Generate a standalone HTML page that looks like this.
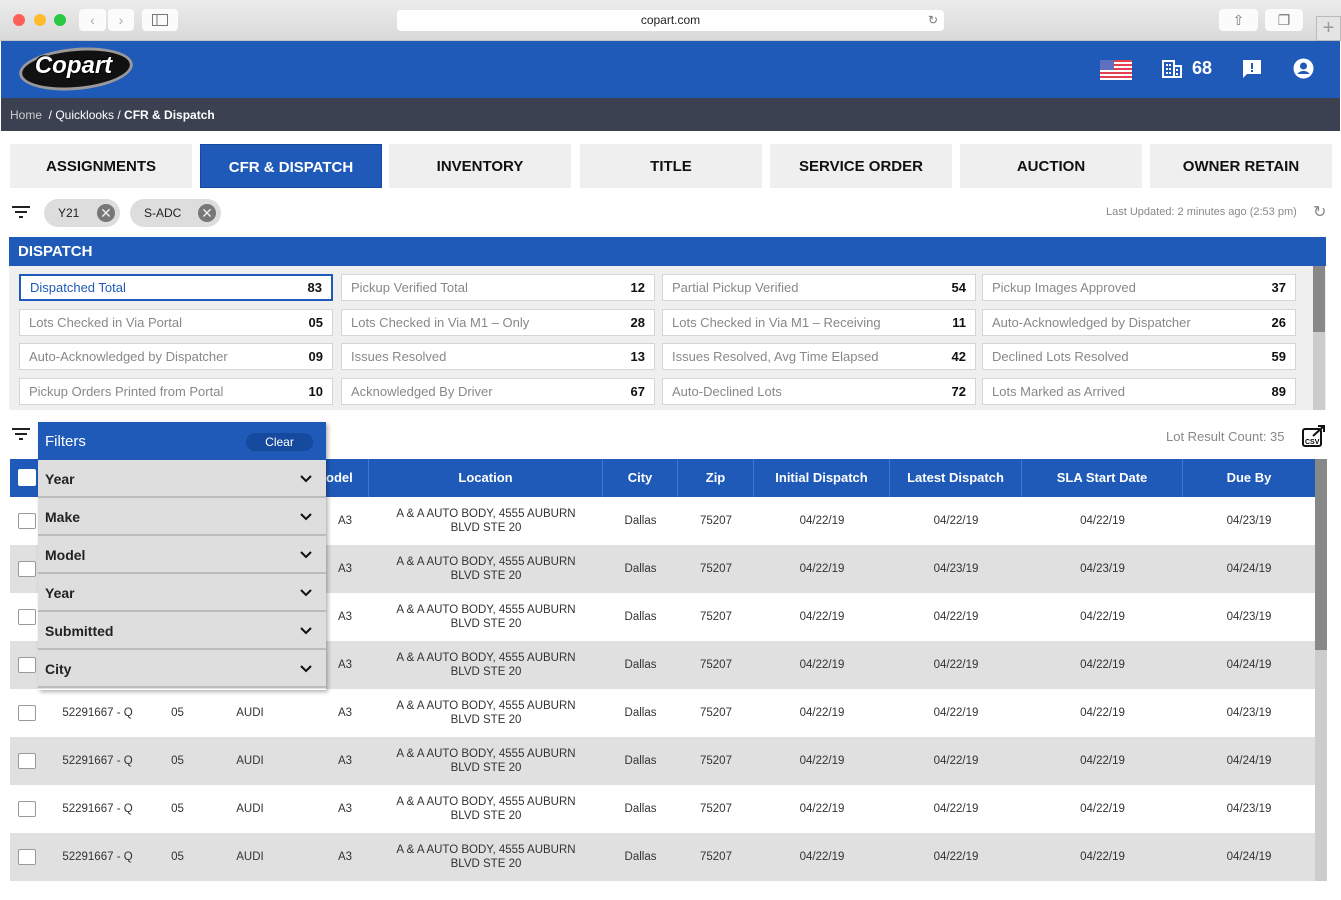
<!DOCTYPE html>
<html><head><meta charset="utf-8"><style>
*{box-sizing:border-box;margin:0;padding:0}
body{width:1341px;height:900px;overflow:hidden;background:#fff;font-family:"Liberation Sans",sans-serif;position:relative}
.a{position:absolute}
.chrome{left:0;top:0;width:1341px;height:41px;background:linear-gradient(#ececec,#d9d9d9);border-bottom:1px solid #c4c4c4}
.dot{width:12px;height:12px;border-radius:50%;top:14px}
.btn{background:#fbfbfb;border-radius:4px;height:22px;top:9px;color:#aaa;font-size:14px;text-align:center;line-height:22px}
.hdr{left:1px;top:41px;width:1339px;height:57px;background:#1f5ab9}
.bc{left:1px;top:98px;width:1339px;height:33px;background:#3b4150;color:#fff;font-size:12px;line-height:34px;padding-left:9px}
.tab{top:144px;height:44px;width:182px;background:#efefef;font-weight:bold;font-size:15px;text-align:center;line-height:45px;color:#111}
.tab.on{background:#1f5ab9;color:#fff;border:1px solid #164a9e}
.chip{top:199px;height:28px;border-radius:14px;background:#ddd;font-size:12px;line-height:28px;padding-left:14px;color:#222}
.chip i{position:absolute;right:5px;top:5px;width:18px;height:18px;border-radius:50%;background:#777;color:#eee;font-style:normal;text-align:center;line-height:18px;font-size:14px}
.card{height:27px;width:314px;background:#fff;border:1px solid #d5d5d5;font-size:13px;color:#888;line-height:26px;padding-left:9px}
.card b{position:absolute;right:9px;top:0;color:#111;font-size:13px}
.th{top:459px;height:38px;background:#1f5ab9;color:#fff;font-weight:bold;font-size:13px;line-height:38px;text-align:center;border-right:1px solid #3f78cf}
.row{left:10px;width:1305px;height:48px;font-size:11.5px;color:#333}
.row span{position:absolute;top:0;line-height:48px;text-align:center}
.row .loc{line-height:14px;top:10px}
.cb{position:absolute;left:8px;top:16px;width:18px;height:16px;border:1px solid #999;border-radius:2px;background:#fff}
.fi{left:38px;width:288px;height:38px;background:#dedede;border-bottom:2px solid #bbb;font-weight:bold;font-size:14px;line-height:38px;padding-left:7px;color:#222}
.fi svg{position:absolute;right:14px;top:15px}
</style></head><body>
<div class="a chrome"></div>
<div class="a dot" style="left:13px;background:#fe5f57"></div>
<div class="a dot" style="left:34px;background:#febc2e"></div>
<div class="a dot" style="left:54px;background:#28c840"></div>
<div class="a btn" style="left:79px;width:27px">‹</div>
<div class="a btn" style="left:108px;width:26px">›</div>
<div class="a btn" style="left:142px;width:36px"><svg width="16" height="12" style="margin-top:5px"><rect x="0.5" y="0.5" width="15" height="11" fill="none" stroke="#777"/><line x1="5" y1="0" x2="5" y2="12" stroke="#777"/></svg></div>
<div class="a" style="left:397px;top:10px;width:547px;height:21px;background:#fff;border-radius:4px;font-size:12px;text-align:center;line-height:21px;color:#222">copart.com<span style="position:absolute;right:6px;color:#777">↻</span></div>
<div class="a btn" style="left:1219px;width:39px;color:#777">⇧</div>
<div class="a btn" style="left:1265px;width:38px;color:#777">❐</div>
<div class="a" style="left:1316px;top:16px;width:25px;height:25px;border:1px solid #bbb;background:#e4e4e4;color:#999;font-size:20px;text-align:center;line-height:22px">+</div>

<div class="a hdr"></div>
<div class="a" style="left:19px;top:48px;width:114px;height:42px;border-radius:50%;background:#111;border:3px solid #999;transform:rotate(-5deg)"></div>
<div class="a" style="left:21px;top:52px;width:105px;text-align:center;font-size:24px;font-weight:bold;font-style:italic;color:#fff;text-shadow:1px 1px 0 #000,-1px -1px 0 #000">Copart</div>
<svg class="a" style="left:1100px;top:60px" width="32" height="20"><rect width="32" height="20" fill="#fff"/><g fill="#e04050"><rect y="0" width="32" height="2"/><rect y="4" width="32" height="2"/><rect y="8" width="32" height="2"/><rect y="12" width="32" height="2"/><rect y="16" width="32" height="2"/></g><rect width="14" height="10" fill="#6070c0"/></svg>
<svg class="a" style="left:1162px;top:60px" width="20" height="18"><path d="M1 1h11v16H1z M12 6h7v11h-7" fill="none" stroke="#fff" stroke-width="2"/><g fill="#fff"><rect x="4" y="4" width="2" height="2"/><rect x="7" y="4" width="2" height="2"/><rect x="4" y="8" width="2" height="2"/><rect x="7" y="8" width="2" height="2"/><rect x="4" y="12" width="2" height="2"/><rect x="7" y="12" width="2" height="2"/><rect x="14" y="9" width="2" height="2"/><rect x="14" y="13" width="2" height="2"/></g></svg>
<div class="a" style="left:1192px;top:58px;color:#fff;font-weight:bold;font-size:18px">68</div>
<svg class="a" style="left:1242px;top:59px" width="20" height="20"><path d="M1 1h18v14H5l-4 4z" fill="#fff"/><rect x="9" y="4" width="2" height="6" fill="#1f5ab9"/><rect x="9" y="11" width="2" height="2" fill="#1f5ab9"/></svg>
<svg class="a" style="left:1293px;top:58px" width="21" height="21"><circle cx="10.5" cy="10.5" r="10" fill="#fff"/><circle cx="10.5" cy="8" r="3.5" fill="#1f5ab9"/><path d="M4.5 16c2-4 10-4 12 0" fill="#1f5ab9"/></svg>
<div class="a bc"><span style="color:#ccc">Home</span> &nbsp;/ Quicklooks / <b>CFR &amp; Dispatch</b></div>

<div class="a tab" style="left:10px">ASSIGNMENTS</div>
<div class="a tab on" style="left:200px">CFR &amp; DISPATCH</div>
<div class="a tab" style="left:389px">INVENTORY</div>
<div class="a tab" style="left:580px">TITLE</div>
<div class="a tab" style="left:770px">SERVICE ORDER</div>
<div class="a tab" style="left:960px">AUCTION</div>
<div class="a tab" style="left:1150px">OWNER RETAIN</div>

<svg class="a" style="left:12px;top:206px" width="18" height="13"><rect y="0" width="18" height="2" fill="#222"/><rect x="3" y="5" width="12" height="2" fill="#222"/><rect x="7" y="10" width="4" height="2" fill="#222"/></svg>
<div class="a chip" style="left:44px;width:76px">Y21<i>✕</i></div>
<div class="a chip" style="left:130px;width:91px">S-ADC<i>✕</i></div>
<div class="a" style="left:1106px;top:206px;font-size:11px;color:#888">Last Updated: 2 minutes ago (2:53 pm)</div>
<div class="a" style="left:1313px;top:202px;font-size:16px;color:#888">↻</div>

<div class="a" style="left:9px;top:237px;width:1317px;height:29px;background:#1f5ab9;color:#fff;font-weight:bold;font-size:15px;line-height:30px;padding-left:9px">DISPATCH</div>
<div class="a" style="left:9px;top:266px;width:1317px;height:144px;background:#efefef"></div>
<div class="a" style="left:1313px;top:266px;width:12px;height:144px;background:#ccc"></div>
<div class="a" style="left:1313px;top:266px;width:12px;height:66px;background:#888"></div>

<div class="a card" style="left:19px;top:274px;border:2px solid #1f5ab9;color:#1f5ab9;line-height:24px">Dispatched Total<b>83</b></div>
<div class="a card" style="left:341px;top:274px">Pickup Verified Total<b>12</b></div>
<div class="a card" style="left:662px;top:274px">Partial Pickup Verified<b>54</b></div>
<div class="a card" style="left:982px;top:274px">Pickup Images Approved<b>37</b></div>
<div class="a card" style="left:19px;top:309px">Lots Checked in Via Portal<b>05</b></div>
<div class="a card" style="left:341px;top:309px">Lots Checked in Via M1 – Only<b>28</b></div>
<div class="a card" style="left:662px;top:309px">Lots Checked in Via M1 – Receiving<b>11</b></div>
<div class="a card" style="left:982px;top:309px">Auto-Acknowledged by Dispatcher<b>26</b></div>
<div class="a card" style="left:19px;top:343px">Auto-Acknowledged by Dispatcher<b>09</b></div>
<div class="a card" style="left:341px;top:343px">Issues Resolved<b>13</b></div>
<div class="a card" style="left:662px;top:343px">Issues Resolved, Avg Time Elapsed<b>42</b></div>
<div class="a card" style="left:982px;top:343px">Declined Lots Resolved<b>59</b></div>
<div class="a card" style="left:19px;top:378px">Pickup Orders Printed from Portal<b>10</b></div>
<div class="a card" style="left:341px;top:378px">Acknowledged By Driver<b>67</b></div>
<div class="a card" style="left:662px;top:378px">Auto-Declined Lots<b>72</b></div>
<div class="a card" style="left:982px;top:378px">Lots Marked as Arrived<b>89</b></div>

<svg class="a" style="left:12px;top:428px" width="18" height="13"><rect y="0" width="18" height="2" fill="#222"/><rect x="3" y="5" width="12" height="2" fill="#222"/><rect x="7" y="10" width="4" height="2" fill="#222"/></svg>
<div class="a" style="left:1166px;top:429px;font-size:13px;color:#888">Lot Result Count: 35</div>
<svg class="a" style="left:1301px;top:424px" width="26" height="24"><rect x="2" y="5" width="18" height="17" rx="2" fill="none" stroke="#111" stroke-width="2"/><path d="M12 12L23 2M17 2h6v6" fill="none" stroke="#111" stroke-width="2"/><text x="4" y="20" font-size="7" font-family="Liberation Sans" font-weight="bold">CSV</text></svg>

<div class="a th" style="left:10px;width:359px"></div>
<div class="a" style="left:18px;top:469px;width:18px;height:17px;background:#fff;border-radius:2px"></div>
<div class="a th" style="left:326px;width:43px;text-align:left;border-right:1px solid #3f78cf">odel</div>
<div class="a th" style="left:369px;width:234px">Location</div>
<div class="a th" style="left:603px;width:75px">City</div>
<div class="a th" style="left:678px;width:76px">Zip</div>
<div class="a th" style="left:754px;width:136px">Initial Dispatch</div>
<div class="a th" style="left:890px;width:132px">Latest Dispatch</div>
<div class="a th" style="left:1022px;width:161px">SLA Start Date</div>
<div class="a th" style="left:1183px;width:132px;border:none">Due By</div>
<div class="a" style="left:1315px;top:459px;width:12px;height:422px;background:#ccc"></div>
<div class="a" style="left:1315px;top:459px;width:12px;height:191px;background:#888"></div>

<div class="a row" style="top:497px;background:#fff"><i class="cb"></i><span style="left:45px;width:85px">52291667 - Q</span><span style="left:150px;width:35px">05</span><span style="left:215px;width:50px">AUDI</span><span style="left:320px;width:30px">A3</span><span class="loc" style="left:359px;width:234px">A &amp; A AUTO BODY, 4555 AUBURN<br>BLVD STE 20</span><span style="left:593px;width:75px">Dallas</span><span style="left:668px;width:76px">75207</span><span style="left:744px;width:136px">04/22/19</span><span style="left:880px;width:132px">04/22/19</span><span style="left:1012px;width:161px">04/22/19</span><span style="left:1173px;width:132px">04/23/19</span></div>
<div class="a row" style="top:545px;background:#e0e0e0"><i class="cb"></i><span style="left:45px;width:85px">52291667 - Q</span><span style="left:150px;width:35px">05</span><span style="left:215px;width:50px">AUDI</span><span style="left:320px;width:30px">A3</span><span class="loc" style="left:359px;width:234px">A &amp; A AUTO BODY, 4555 AUBURN<br>BLVD STE 20</span><span style="left:593px;width:75px">Dallas</span><span style="left:668px;width:76px">75207</span><span style="left:744px;width:136px">04/22/19</span><span style="left:880px;width:132px">04/23/19</span><span style="left:1012px;width:161px">04/23/19</span><span style="left:1173px;width:132px">04/24/19</span></div>
<div class="a row" style="top:593px;background:#fff"><i class="cb"></i><span style="left:45px;width:85px">52291667 - Q</span><span style="left:150px;width:35px">05</span><span style="left:215px;width:50px">AUDI</span><span style="left:320px;width:30px">A3</span><span class="loc" style="left:359px;width:234px">A &amp; A AUTO BODY, 4555 AUBURN<br>BLVD STE 20</span><span style="left:593px;width:75px">Dallas</span><span style="left:668px;width:76px">75207</span><span style="left:744px;width:136px">04/22/19</span><span style="left:880px;width:132px">04/22/19</span><span style="left:1012px;width:161px">04/22/19</span><span style="left:1173px;width:132px">04/23/19</span></div>
<div class="a row" style="top:641px;background:#e0e0e0"><i class="cb"></i><span style="left:45px;width:85px">52291667 - Q</span><span style="left:150px;width:35px">05</span><span style="left:215px;width:50px">AUDI</span><span style="left:320px;width:30px">A3</span><span class="loc" style="left:359px;width:234px">A &amp; A AUTO BODY, 4555 AUBURN<br>BLVD STE 20</span><span style="left:593px;width:75px">Dallas</span><span style="left:668px;width:76px">75207</span><span style="left:744px;width:136px">04/22/19</span><span style="left:880px;width:132px">04/22/19</span><span style="left:1012px;width:161px">04/22/19</span><span style="left:1173px;width:132px">04/24/19</span></div>
<div class="a row" style="top:689px;background:#fff"><i class="cb"></i><span style="left:45px;width:85px">52291667 - Q</span><span style="left:150px;width:35px">05</span><span style="left:215px;width:50px">AUDI</span><span style="left:320px;width:30px">A3</span><span class="loc" style="left:359px;width:234px">A &amp; A AUTO BODY, 4555 AUBURN<br>BLVD STE 20</span><span style="left:593px;width:75px">Dallas</span><span style="left:668px;width:76px">75207</span><span style="left:744px;width:136px">04/22/19</span><span style="left:880px;width:132px">04/22/19</span><span style="left:1012px;width:161px">04/22/19</span><span style="left:1173px;width:132px">04/23/19</span></div>
<div class="a row" style="top:737px;background:#e0e0e0"><i class="cb"></i><span style="left:45px;width:85px">52291667 - Q</span><span style="left:150px;width:35px">05</span><span style="left:215px;width:50px">AUDI</span><span style="left:320px;width:30px">A3</span><span class="loc" style="left:359px;width:234px">A &amp; A AUTO BODY, 4555 AUBURN<br>BLVD STE 20</span><span style="left:593px;width:75px">Dallas</span><span style="left:668px;width:76px">75207</span><span style="left:744px;width:136px">04/22/19</span><span style="left:880px;width:132px">04/22/19</span><span style="left:1012px;width:161px">04/22/19</span><span style="left:1173px;width:132px">04/24/19</span></div>
<div class="a row" style="top:785px;background:#fff"><i class="cb"></i><span style="left:45px;width:85px">52291667 - Q</span><span style="left:150px;width:35px">05</span><span style="left:215px;width:50px">AUDI</span><span style="left:320px;width:30px">A3</span><span class="loc" style="left:359px;width:234px">A &amp; A AUTO BODY, 4555 AUBURN<br>BLVD STE 20</span><span style="left:593px;width:75px">Dallas</span><span style="left:668px;width:76px">75207</span><span style="left:744px;width:136px">04/22/19</span><span style="left:880px;width:132px">04/22/19</span><span style="left:1012px;width:161px">04/22/19</span><span style="left:1173px;width:132px">04/23/19</span></div>
<div class="a row" style="top:833px;background:#e0e0e0"><i class="cb"></i><span style="left:45px;width:85px">52291667 - Q</span><span style="left:150px;width:35px">05</span><span style="left:215px;width:50px">AUDI</span><span style="left:320px;width:30px">A3</span><span class="loc" style="left:359px;width:234px">A &amp; A AUTO BODY, 4555 AUBURN<br>BLVD STE 20</span><span style="left:593px;width:75px">Dallas</span><span style="left:668px;width:76px">75207</span><span style="left:744px;width:136px">04/22/19</span><span style="left:880px;width:132px">04/22/19</span><span style="left:1012px;width:161px">04/22/19</span><span style="left:1173px;width:132px">04/24/19</span></div>

<div class="a" style="left:38px;top:422px;width:288px;height:268px;box-shadow:2px 2px 4px rgba(0,0,0,.3)"></div>
<div class="a" style="left:38px;top:422px;width:288px;height:38px;background:#1f5ab9;color:#fff;font-size:15px;line-height:40px;padding-left:7px">Filters<span style="position:absolute;left:208px;top:11px;width:67px;height:18px;border-radius:9px;background:#164a9e;font-size:12px;line-height:18px;text-align:center">Clear</span></div>
<div class="a fi" style="top:460px">Year<svg width="12" height="8"><path d="M1 1l5 5 5-5" fill="none" stroke="#111" stroke-width="2"/></svg></div>
<div class="a fi" style="top:498px">Make<svg width="12" height="8"><path d="M1 1l5 5 5-5" fill="none" stroke="#111" stroke-width="2"/></svg></div>
<div class="a fi" style="top:536px">Model<svg width="12" height="8"><path d="M1 1l5 5 5-5" fill="none" stroke="#111" stroke-width="2"/></svg></div>
<div class="a fi" style="top:574px">Year<svg width="12" height="8"><path d="M1 1l5 5 5-5" fill="none" stroke="#111" stroke-width="2"/></svg></div>
<div class="a fi" style="top:612px">Submitted<svg width="12" height="8"><path d="M1 1l5 5 5-5" fill="none" stroke="#111" stroke-width="2"/></svg></div>
<div class="a fi" style="top:650px">City<svg width="12" height="8"><path d="M1 1l5 5 5-5" fill="none" stroke="#111" stroke-width="2"/></svg></div>
</body></html>
